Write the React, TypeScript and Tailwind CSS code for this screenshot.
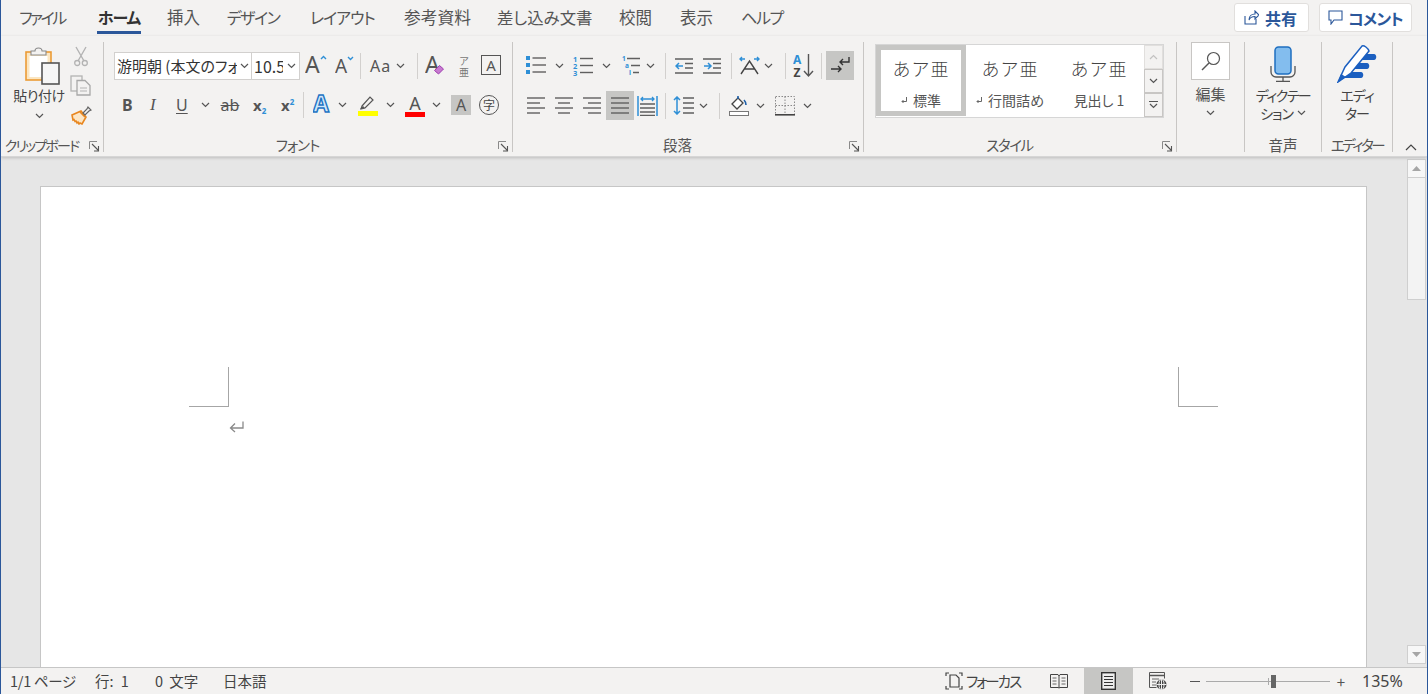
import React from "react";

const G = "#5f5f5f";
const B = "#2e8fd6";
const ff = "'Noto Sans','Noto Sans CJK JP',sans-serif";

type P = { className?: string };

function Chev({ className = "" }: P) {
  return (
    <svg width="9" height="6" viewBox="0 0 9 6" className={"shrink-0 " + className}>
      <path d="M1 1l3.5 3.5L8 1" fill="none" stroke="#555" strokeWidth="1.2" />
    </svg>
  );
}
function Sep({ className = "" }: P) {
  return <div className={"w-px h-[26px] bg-[#d2d0ce] shrink-0 " + className} />;
}
function Launcher() {
  return (
    <svg width="11" height="11" viewBox="0 0 11 11" className="absolute right-[3px] top-[5px]">
      <path d="M.5 8V.5H8" fill="none" stroke="#8a8a8a" />
      <path d="M3 3l6 6M9.5 5v5H5" fill="none" stroke="#555" strokeWidth="1.1" />
    </svg>
  );
}
function Label({ children, className = "" }: { children: React.ReactNode; className?: string }) {
  return <div className={"text-[14.5px] leading-[18px] text-center text-[#555] whitespace-nowrap " + className}>{children}</div>;
}
function Lines({ className = "", ys, x1, x2 }: P & { ys: number[]; x1: number[]; x2: number[] }) {
  return (
    <svg width="20" height="20" viewBox="0 0 20 20" className={"shrink-0 " + className}>
      {ys.map((y, i) => (
        <path key={i} d={`M${x1[i]} ${y}H${x2[i]}`} stroke={G} strokeWidth="1.4" />
      ))}
    </svg>
  );
}

function Paste({ className = "" }: P) {
  return (
    <svg width="38" height="40" viewBox="0 0 38 40" className={className}>
      <rect x="2" y="7" width="25" height="28" fill="#fbe6c2" stroke="#eb9b35" strokeWidth="1.6" />
      <rect x="5.5" y="11" width="18" height="21" fill="#fff" />
      <path d="M7 10V6h4c0-4 7-4 7 0h4v4z" fill="#f3f2f1" stroke="#8a8a8a" strokeWidth="1.1" />
      <rect x="18" y="18" width="17" height="21" fill="#f6f6f6" stroke="#555" strokeWidth="1.6" />
    </svg>
  );
}
function Scissors() {
  return (
    <svg width="14" height="21" viewBox="0 0 14 21">
      <path d="M2 1l8 14M12 1L4 15" stroke="#b3b3b3" strokeWidth="1.4" fill="none" />
      <circle cx="3.2" cy="17" r="2.5" fill="none" stroke="#b3b3b3" strokeWidth="1.3" />
      <circle cx="10.8" cy="17" r="2.5" fill="none" stroke="#b3b3b3" strokeWidth="1.3" />
    </svg>
  );
}
function Copy() {
  return (
    <svg width="22" height="21" viewBox="0 0 22 21">
      <rect x="1" y="1" width="11" height="15" fill="none" stroke="#b3b3b3" strokeWidth="1.3" />
      <path d="M7 5.5h8l5 5v9.5H7z" fill="#f3f2f1" stroke="#a8a8a8" strokeWidth="1.3" />
      <path d="M10 13h7M10 16h7" stroke="#b3b3b3" />
    </svg>
  );
}
function Brush({ className = "" }: P) {
  return (
    <svg width="21" height="20" viewBox="0 0 21 20" className={className}>
      <path d="M1 10l9-4 5 6-4 7-2-1-1 1-1-2-1 1-1-2-1 .5-1-2-1 .5z" fill="#fce6c6" stroke="#e8861f" strokeWidth="1.6" />
      <path d="M9 7l5 5" stroke="#e8861f" strokeWidth="1.6" />
      <path d="M12 8l4-4 1-2 3 3-2 1-4 4z" fill="#f3f2f1" stroke="#666" strokeWidth="1.2" />
    </svg>
  );
}
function TA({
  s = 20,
  size = 22,
  weight = 400,
  children,
  className = "",
  w = 22,
  fill = "#555",
  stroke,
}: P & { s?: number; size?: number; weight?: number; children?: React.ReactNode; w?: number; fill?: string; stroke?: string }) {
  return (
    <svg width={w} height={s + 6} viewBox={`0 0 ${w} ${s + 6}`} className={"shrink-0 " + className}>
      <text x="0" y={s} fontFamily={ff} fontSize={size} fontWeight={weight} fill={fill} stroke={stroke} strokeWidth={stroke ? 1.4 : 0}>
        A
      </text>
      {children}
    </svg>
  );
}
function Bullets({ className = "" }: P) {
  return (
    <svg width="21" height="19" viewBox="0 0 21 19" className={"shrink-0 " + className}>
      {[2, 9, 16].map((y) => (
        <g key={y}>
          <rect x="0" y={y - 2} width="4" height="4" fill={B} />
          <path d={`M6.5 ${y}H20`} stroke={G} strokeWidth="1.4" />
        </g>
      ))}
    </svg>
  );
}
function Numbers({ className = "" }: P) {
  return (
    <svg width="21" height="21" viewBox="0 0 21 21" className={"shrink-0 " + className}>
      {["1", "2", "3"].map((n, i) => (
        <g key={n}>
          <text x="0" y={6.5 + i * 7} fontSize="7.5" fontWeight="700" fill={B} fontFamily={ff}>
            {n}
          </text>
          <path d={`M7 ${3.5 + i * 7}H20`} stroke={G} strokeWidth="1.4" />
        </g>
      ))}
    </svg>
  );
}
function Multi({ className = "" }: P) {
  return (
    <svg width="20" height="21" viewBox="0 0 20 21" className={"shrink-0 " + className}>
      <text x="1" y="6" fontSize="6.5" fontWeight="700" fill={B} fontFamily={ff}>1</text>
      <text x="4" y="13" fontSize="6.5" fontWeight="700" fill={B} fontFamily={ff}>a</text>
      <text x="8" y="20" fontSize="6.5" fontWeight="700" fill={B} fontFamily={ff}>i</text>
      <path d="M6 3.5h13M10 10.5h9M12 17.5h6" stroke={G} strokeWidth="1.4" />
    </svg>
  );
}
function Indent({ className = "", rev = false }: P & { rev?: boolean }) {
  return (
    <svg width="19" height="16" viewBox="0 0 19 16" className={"shrink-0 " + className}>
      <path d="M0 1h18M10 5.5h8M10 10h8M0 15h18" stroke={G} strokeWidth="1.3" />
      {rev ? (
        <path d="M1 8h7M5 5l3 3-3 3" fill="none" stroke={B} strokeWidth="1.5" />
      ) : (
        <path d="M8 8H1M4 5L1 8l3 3" fill="none" stroke={B} strokeWidth="1.5" />
      )}
    </svg>
  );
}
function Direction({ className = "" }: P) {
  return (
    <svg width="21" height="19" viewBox="0 0 21 19" className={"shrink-0 " + className}>
      <path d="M1 3h5M3 1L1 3l2 2M15 3h5M18 1l2 2-2 2" fill="none" stroke={B} strokeWidth="1.4" />
      <path d="M2 18L10.5 5 19 18M5.5 13h10" fill="none" stroke="#444" strokeWidth="1.4" />
    </svg>
  );
}
function SortAZ({ className = "" }: P) {
  return (
    <svg width="21" height="25" viewBox="0 0 21 25" className={"shrink-0 " + className}>
      <text x="0" y="10.5" fontSize="12" fontWeight="700" fill={B} fontFamily={ff}>A</text>
      <text x="0.5" y="23.5" fontSize="12" fontWeight="700" fill="#444" fontFamily={ff}>Z</text>
      <path d="M15.5 1v21M11 18l4.500 5 4.500-5" fill="none" stroke="#555" strokeWidth="1.4" />
    </svg>
  );
}
function Para() {
  return (
    <svg width="22" height="20" viewBox="0 0 22 20">
      <path d="M20 1v5H11M14 3l-3 3 3 3" fill="none" stroke="#333" strokeWidth="1.4" />
      <path d="M2 13h10M9 10l3 3-3 3" fill="none" stroke="#333" strokeWidth="1.4" />
    </svg>
  );
}
function Distributed({ className = "" }: P) {
  return (
    <svg width="21" height="20" viewBox="0 0 21 20" className={"shrink-0 " + className}>
      <path d="M1 0v20M20 0v20" stroke={B} strokeWidth="1.5" />
      <path d="M4 3h13M6 1L4 3l2 2M15 1l2 2-2 2" fill="none" stroke={B} strokeWidth="1.3" />
      <path d="M3 8h15M3 12h15M3 16h15M3 19.3h15" stroke={G} strokeWidth="1.3" />
    </svg>
  );
}
function LineSpacing({ className = "" }: P) {
  return (
    <svg width="22" height="19" viewBox="0 0 22 19" className={"shrink-0 " + className}>
      <path d="M4 1v17M1 4l3-3 3 3M1 15l3 3 3-3" fill="none" stroke={B} strokeWidth="1.5" />
      <path d="M10 2h11M10 7h11M10 12h11M10 17h11" stroke={G} strokeWidth="1.4" />
    </svg>
  );
}
function Shade({ className = "" }: P) {
  return (
    <svg width="20" height="21" viewBox="0 0 20 21" className={"shrink-0 " + className}>
      <path d="M3 9l6-6 5 5-6 6z" fill="#fff" stroke="#444" strokeWidth="1.3" />
      <path d="M9 1v3M15 5c2 2 2 4 2 5" fill="none" stroke="#1d5fa8" strokeWidth="1.6" />
      <rect x=".5" y="16.5" width="19" height="4" fill="#fff" stroke="#777" />
    </svg>
  );
}
function Borders({ className = "" }: P) {
  return (
    <svg width="20" height="20" viewBox="0 0 20 20" className={"shrink-0 " + className}>
      <path d="M.5.5h19v18h-19zM10 .5v18M.5 9.5h19" fill="none" stroke="#8a8a8a" strokeDasharray="1.5 1.5" />
      <path d="M0 18.8h20" stroke="#444" strokeWidth="1.6" />
    </svg>
  );
}
function Mag() {
  return (
    <svg width="20" height="20" viewBox="0 0 20 20">
      <circle cx="12.5" cy="7.5" r="6" fill="none" stroke="#555" strokeWidth="1.2" />
      <path d="M8 12l-7 7" stroke="#555" strokeWidth="1.5" />
    </svg>
  );
}
function Mic() {
  return (
    <svg width="26" height="36" viewBox="0 0 26 36">
      <rect x="5" y="1" width="16" height="27" rx="3.5" fill="#83bdee" stroke="#1f6fc0" strokeWidth="1.5" />
      <path d="M1 20v6a5 5 0 0 0 5 5h14a5 5 0 0 0 5-5v-6M13 31v4M6 35.3h14" fill="none" stroke="#555" strokeWidth="1.3" />
    </svg>
  );
}
function Pen() {
  return (
    <svg width="40" height="38" viewBox="0 0 40 38">
      <path d="M22 9h15c3 0 3 6 0 6H17zM15 18h15c3 0 3 6 0 6H11zM9 27h15c3 0 3 6 0 6H6z" fill="#1b5fc0" />
      <path d="M1 37L8 22 25 1c2-1 6 2 7 5L14 28z" fill="#fff" stroke="#1b5fc0" strokeWidth="1.5" />
      <path d="M1 37l3-8 5 3z" fill="#1b5fc0" />
    </svg>
  );
}
function Share() {
  return (
    <svg width="15" height="15" viewBox="0 0 15 15" className="shrink-0">
      <path d="M1 6v8h11V9" fill="none" stroke="#2b579a" strokeWidth="1.1" />
      <path d="M5 10c0-4 3-6 6-6V1l4 4-4 4V6.5c-2 0-5 1-6 3.5z" fill="none" stroke="#2b579a" strokeWidth="1.1" />
    </svg>
  );
}
function Bubble() {
  return (
    <svg width="15" height="15" viewBox="0 0 15 15" className="shrink-0">
      <path d="M1 1h13v9H6l-3 4v-4H1z" fill="none" stroke="#2b579a" strokeWidth="1.1" />
    </svg>
  );
}
function Focus() {
  return (
    <svg width="18" height="18" viewBox="0 0 18 18" className="shrink-0">
      <path d="M1 4V1h3M14 1h3v3M1 14v3h3M14 17h3v-3" fill="none" stroke="#444" strokeWidth="1.2" />
      <path d="M5 3h6l3 3v9H5z" fill="none" stroke="#444" strokeWidth="1.2" />
    </svg>
  );
}
function ReadMode({ className = "" }: P) {
  return (
    <svg width="18" height="15" viewBox="0 0 18 15" className={"shrink-0 " + className}>
      <path d="M.5.5H8L9 2l1-1.5h7.500v13H10L9 14l-1-.5H.5zM9 2v12" fill="none" stroke="#444" />
      <path d="M2.5 4h4M2.5 7h4M2.5 10h4M11.5 4h4M11.5 7h4M11.5 10h4" stroke="#666" />
    </svg>
  );
}
function PrintMode() {
  return (
    <svg width="15" height="18" viewBox="0 0 15 18" className="shrink-0">
      <rect x=".7" y=".7" width="13.6" height="16.6" fill="#eee" stroke="#333" strokeWidth="1.4" />
      <path d="M3 4.5h9M3 7.5h9M3 10.5h9M3 13.5h9" stroke="#333" strokeWidth="1.2" />
    </svg>
  );
}
function WebMode({ className = "" }: P) {
  return (
    <svg width="18" height="18" viewBox="0 0 18 18" className={"shrink-0 " + className}>
      <path d="M.5.5h15v6M.5.5v15h7" fill="none" stroke="#555" />
      <path d="M.5 3.5h15" stroke="#555" strokeWidth="1.5" />
      <path d="M3 7h7M3 10h4M3 13h4" stroke="#666" />
      <circle cx="12.5" cy="12.5" r="5" fill="#444" />
      <path d="M7.5 12.5h10M12.5 7.5v10" stroke="#eee" />
      <ellipse cx="12.5" cy="12.5" rx="2.5" ry="5" fill="none" stroke="#eee" />
    </svg>
  );
}
function Tri({ up }: { up?: boolean }) {
  return (
    <svg width="9" height="5" viewBox="0 0 9 5">
      <path d={up ? "M0 5L4.5 0 9 5z" : "M0 0l4.5 5L9 0z"} fill="#a6a6a6" />
    </svg>
  );
}
function Ret({ className = "", small = false }: P & { small?: boolean }) {
  return small ? (
    <svg width="6" height="7" viewBox="0 0 6 7" className={"shrink-0 " + className}>
      <path d="M5.5 0v4.500H1M2.500 3L1 4.500 2.500 6" fill="none" stroke="#666" />
    </svg>
  ) : (
    <svg width="15" height="12" viewBox="0 0 15 12" className={"shrink-0 " + className}>
      <path d="M14 .5V7H1.5M6 2.5L1.5 7 6 11" fill="none" stroke="#8a8a8a" strokeWidth="1.3" />
    </svg>
  );
}

const tabs = [
  { t: "ファイル", c: "ml-[17px] w-[48px] tracking-[-2.4px] text-[16px]" },
  { t: "ホーム", c: "ml-[31px] w-[44px] tracking-[-1px] text-[16px]", on: true },
  { t: "挿入", c: "ml-[26px] w-[33px] text-[16.5px]" },
  { t: "デザイン", c: "ml-[26px] w-[54px] tracking-[-1.5px] text-[16px]" },
  { t: "レイアウト", c: "ml-[30px] w-[64px] tracking-[-1px] text-[16px]" },
  { t: "参考資料", c: "ml-[30px] w-[67px] text-[16.8px]" },
  { t: "差し込み文書", c: "ml-[26px] w-[94px] text-[16.4px]" },
  { t: "校閲", c: "ml-[28px] w-[33px] text-[16.5px]" },
  { t: "表示", c: "ml-[28px] w-[33px] text-[16.5px]" },
  { t: "ヘルプ", c: "ml-[28px] w-[41px] tracking-[-1.3px] text-[16px]" },
];

function Sample({ label, ret, className = "" }: { label: string; ret?: boolean; className?: string }) {
  return (
    <div className={"flex flex-col items-center shrink-0 " + className}>
      <div className="text-[18px] leading-[24px] font-light text-[#444] tracking-[1px] mt-[10px] [font-feature-settings:normal]">
        あア亜
      </div>
      <div className="flex items-center gap-[6px] text-[14px] leading-[20px] text-[#555] mt-[10px]">
        {ret && <Ret small />}
        <span>{label}</span>
      </div>
    </div>
  );
}

export default function App() {
  return (
    <div className="w-[1428px] h-[694px] overflow-hidden flex flex-col bg-[#f3f2f1] border-x border-[#2b579a] font-['Noto_Sans_CJK_JP','Noto_Sans',sans-serif] [font-feature-settings:'palt'] text-[#444]">
      {/* tab bar */}
      <div className="h-[36px] flex shrink-0 relative">
        {tabs.map((x) => (
          <div
            key={x.t}
            className={
              "pt-[5px] text-center leading-[24px] whitespace-nowrap shrink-0 " +
              x.c +
              (x.on ? " font-bold text-[#333] border-b-[3px] border-[#2b579a] h-[34px]" : " h-[36px] text-[#555]")
            }
          >
            {x.t}
          </div>
        ))}
        <div className="ml-auto mr-[15px] mt-[3px] flex gap-[10px] h-[29px]">
          <div className="w-[75px] bg-white border border-[#e1dfdd] rounded-[3px] flex items-center justify-center gap-[6px] text-[16px] font-bold text-[#2b579a] pr-[2px]">
            <Share />
            共有
          </div>
          <div className="w-[93px] bg-white border border-[#e1dfdd] rounded-[3px] flex items-center justify-center gap-[5px] text-[16px] font-bold text-[#2b579a] tracking-[-0.8px]">
            <Bubble />
            コメント
          </div>
        </div>
      </div>

      {/* ribbon */}
      <div className="h-[121px] shrink-0 flex pt-[6px] pb-[4px] border-b border-[#d6d6d6] shadow-[0_1px_3px_rgba(0,0,0,0.18)] relative z-10">
        {/* clipboard */}
        <div className="w-[103px] shrink-0 border-r border-[#c8c6c4] flex flex-col">
          <div className="flex flex-1 min-h-0">
            <div className="w-[64px] ml-[6px] flex flex-col items-center pt-[3px]">
              <Paste className="ml-[8px]" />
              <div className="text-[14px] leading-[18px] mt-[1px] text-[#444] whitespace-nowrap tracking-[-0.5px]">貼り付け</div>
              <Chev className="mt-[9px]" />
            </div>
            <div className="flex flex-col items-center w-[22px] ml-[-1px] gap-[8px] pt-[4px]">
              <Scissors />
              <Copy />
              <Brush className="mt-[1px]" />
            </div>
          </div>
          <div className="relative -mb-[2px] pr-[21px]">
            <Label className="text-[14px] tracking-[-1.8px]">クリップボード</Label>
            <Launcher />
          </div>
        </div>

        {/* font */}
        <div className="w-[409px] shrink-0 border-r border-[#c8c6c4] flex flex-col">
          <div className="flex-1 min-h-0 pt-[10px]">
            <div className="flex items-center h-[28px] pl-[10px]">
              <div className="w-[138px] h-[28px] bg-white border border-[#d2d0ce] flex items-center overflow-hidden shrink-0">
                <span className="w-[122px] overflow-hidden whitespace-nowrap pl-[2px] text-[15px] text-[#333] shrink-0">游明朝 (本文のフォント</span>
                <Chev className="ml-[3px]" />
              </div>
              <div className="w-[48px] h-[28px] bg-white border border-[#d2d0ce] border-l-0 flex items-center overflow-hidden shrink-0">
                <span className="w-[31px] overflow-hidden whitespace-nowrap pl-[2px] text-[16px] text-[#333] shrink-0">10.5</span>
                <Chev className="ml-[4px]" />
              </div>
              <TA className="ml-[5px]" size={23} w={22}>
                <path d="M16 6l2.500-2.500L21 6" fill="none" stroke={B} strokeWidth="1.4" />
              </TA>
              <TA className="ml-[8px]" size={19} w={20}>
                <path d="M13 4l2.500 2.500L18 4" fill="none" stroke={B} strokeWidth="1.4" />
              </TA>
              <Sep className="ml-[5px]" />
              <span className="ml-[9px] w-[26px] text-[16px] tracking-[1px] text-[#555] font-['Noto_Sans',sans-serif]">Aa</span>
              <Chev />
              <Sep className="ml-[12px]" />
              <TA className="ml-[7px]" size={23} w={22}>
                <path d="M9.500 17.500l5-5 4 3.500-5 5z" fill="#c77ad0" stroke="#a03eb0" />
              </TA>
              <div className="ml-[11px] w-[12px] text-[10px] leading-[11px] text-center text-[#777]">
                ア<br />亜
              </div>
              <div className="ml-[11px] w-[20px] h-[20px] -mt-[2px] border border-[#555] flex items-center justify-center text-[15px] leading-none text-[#555] font-['Noto_Sans',sans-serif]">
                A
              </div>
            </div>
            <div className="flex items-center h-[28px] mt-[11px] pl-[18px] font-['Noto_Sans',sans-serif] text-[#555]">
              <span className="w-[12px] text-[16px] font-bold">B</span>
              <span className="ml-[16px] w-[10px] text-[17px] italic font-['Liberation_Serif',serif]">I</span>
              <span className="ml-[16px] w-[14px] text-[16px] underline underline-offset-2">U</span>
              <Chev className="ml-[11px]" />
              <span className="ml-[10px] w-[20px] text-[16px] line-through text-center">ab</span>
              <span className="ml-[13px] w-[15px] text-[15px] font-bold leading-none whitespace-nowrap">
                x<span className="text-[8px] text-[#2e8fd6] relative top-[3px]">2</span>
              </span>
              <span className="ml-[13px] w-[15px] text-[15px] font-bold leading-none whitespace-nowrap">
                x<span className="text-[8px] text-[#2e8fd6] relative top-[-6px]">2</span>
              </span>
              <Sep className="ml-[7px]" />
              <TA className="ml-[9px]" size={23} weight={700} w={22} fill="#d3e9f9" stroke="#1e74c4" />
              <Chev className="ml-[3px]" />
              <svg width="22" height="22" viewBox="0 0 22 22" className="ml-[10px] shrink-0">
                <path d="M5 12l8-9 3 3-8 8-4 1z" fill="#f3f2f1" stroke="#555" strokeWidth="1.2" />
                <path d="M3 15l5-1-2-2z" fill="#555" />
                <rect x="1" y="17" width="20" height="5" fill="#ffff00" />
              </svg>
              <Chev className="ml-[7px]" />
              <div className="ml-[10px] w-[20px] flex flex-col items-center shrink-0">
                <span className="text-[18px] leading-[18px] text-[#555]">A</span>
                <span className="w-[20px] h-[5px] bg-[#ff0000]" />
              </div>
              <Chev className="ml-[7px]" />
              <div className="ml-[10px] w-[20px] h-[20px] bg-[#c6c6c4] flex items-center justify-center text-[16px] text-[#555] shrink-0">A</div>
              <div className="ml-[8px] w-[20px] h-[20px] rounded-full border-[1.5px] border-[#555] flex items-center justify-center text-[12px] leading-none text-[#444] shrink-0 font-['Noto_Sans_CJK_JP',sans-serif]">字</div>
            </div>
          </div>
          <div className="relative -mb-[2px] pr-[21px]">
            <Label className="tracking-[-1px]">フォント</Label>
            <Launcher />
          </div>
        </div>

        {/* paragraph */}
        <div className="w-[351px] shrink-0 border-r border-[#c8c6c4] flex flex-col">
          <div className="flex-1 min-h-0 pt-[9px]">
            <div className="flex items-center h-[29px] pl-[13px]">
              <Bullets />
              <Chev className="ml-[8px]" />
              <Numbers className="ml-[9px]" />
              <Chev className="ml-[8px]" />
              <Multi className="ml-[10px]" />
              <Chev className="ml-[5px]" />
              <Sep className="ml-[10px]" />
              <Indent className="ml-[9px]" />
              <Indent className="ml-[9px]" rev />
              <Sep className="ml-[9px]" />
              <Direction className="ml-[7px]" />
              <Chev className="ml-[4px]" />
              <Sep className="ml-[12px]" />
              <SortAZ className="ml-[7px]" />
              <Sep className="ml-[7px]" />
              <div className="ml-[4px] w-[28px] h-[29px] bg-[#c6c6c4] flex items-center justify-center shrink-0">
                <Para />
              </div>
            </div>
            <div className="flex items-center h-[29px] mt-[11px] pl-[14px]">
              <Lines ys={[2, 7, 12, 17]} x1={[0, 0, 0, 0]} x2={[18, 13, 18, 13]} />
              <Lines className="ml-[8px]" ys={[2, 7, 12, 17]} x1={[0, 3, 0, 3]} x2={[18, 15, 18, 15]} />
              <Lines className="ml-[8px]" ys={[2, 7, 12, 17]} x1={[0, 5, 0, 5]} x2={[18, 18, 18, 18]} />
              <div className="ml-[3px] w-[28px] h-[29px] bg-[#c6c6c4] flex items-center justify-center shrink-0">
                <Lines ys={[2, 7, 12, 17]} x1={[1, 1, 1, 1]} x2={[19, 19, 19, 19]} />
              </div>
              <Distributed className="ml-[3px]" />
              <Sep className="ml-[7px]" />
              <LineSpacing className="ml-[7px]" />
              <Chev className="ml-[4px]" />
              <Sep className="ml-[11px]" />
              <Shade className="ml-[9px]" />
              <Chev className="ml-[7px]" />
              <Borders className="ml-[10px]" />
              <Chev className="ml-[8px]" />
            </div>
          </div>
          <div className="relative -mb-[2px] pr-[21px]">
            <Label>段落</Label>
            <Launcher />
          </div>
        </div>

        {/* styles */}
        <div className="w-[313px] shrink-0 border-r border-[#c8c6c4] flex flex-col">
          <div className="flex-1 min-h-0 pt-[2px] pl-[11px]">
            <div className="w-[289px] h-[74px] border border-[#d6d6d6] bg-white flex">
              <div className="w-[90px] h-[71px] shrink-0 border-[5px] border-[#c6c6c4] flex flex-col items-center">
                <div className="-mt-[4px]">
                  <Sample label="標準" ret />
                </div>
              </div>
              <Sample label="行間詰め" ret className="w-[88px] mt-[1px]" />
              <Sample label="見出し 1" className="w-[90px] mt-[1px]" />
              <div className="flex-1 flex flex-col">
                <div className="h-[24px] border border-[#e1dfdd] bg-[#f3f2f1] flex items-center justify-center">
                  <Chev className="opacity-30 rotate-180" />
                </div>
                <div className="h-[24px] border border-[#c8c6c4] bg-[#f3f2f1] flex items-center justify-center">
                  <Chev />
                </div>
                <div className="h-[24px] border border-[#c8c6c4] bg-[#f3f2f1] flex flex-col items-center justify-center gap-[1px]">
                  <div className="w-[9px] h-px bg-[#555]" />
                  <Chev />
                </div>
              </div>
            </div>
          </div>
          <div className="relative -mb-[2px] pr-[21px]">
            <Label className="tracking-[-1.4px]">スタイル</Label>
            <Launcher />
          </div>
        </div>

        {/* edit */}
        <div className="w-[68px] shrink-0 border-r border-[#c8c6c4] flex flex-col items-center">
          <div className="w-[39px] h-[38px] bg-white border border-[#c8c6c4] flex items-center justify-center">
            <Mag />
          </div>
          <div className="text-[15px] leading-[18px] mt-[5px] text-[#555]">編集</div>
          <Chev className="mt-[7px]" />
        </div>

        {/* dictation */}
        <div className="w-[77px] shrink-0 border-r border-[#c8c6c4] flex flex-col items-center">
          <div className="mt-[4px] h-[36px]">
            <Mic />
          </div>
          <div className="mt-[4px] text-[14px] leading-[18px] text-[#444] whitespace-nowrap tracking-[-1.5px]">ディクテー</div>
          <div className="text-[14px] leading-[18px] text-[#444] whitespace-nowrap flex items-center gap-[4px] tracking-[-1px]">
            ション
            <Chev />
          </div>
          <div className="mt-auto -mb-[2px]">
            <Label>音声</Label>
          </div>
        </div>

        {/* editor */}
        <div className="w-[71px] shrink-0 border-r border-[#c8c6c4] flex flex-col items-center">
          <div className="mt-[3px] h-[38px]">
            <Pen />
          </div>
          <div className="mt-[3px] text-[14px] leading-[18px] text-[#444] whitespace-nowrap text-center tracking-[-1px]">
            エディ
            <br />
            ター
          </div>
          <div className="mt-auto -mb-[2px]">
            <Label className="tracking-[-2.400px]">エディター</Label>
          </div>
        </div>

        {/* collapse */}
        <div className="flex-1 flex items-end justify-end pr-[10px] pb-[1px]">
          <svg width="12" height="7" viewBox="0 0 12 7">
            <path d="M1 6l5-5 5 5" fill="none" stroke="#444" strokeWidth="1.2" />
          </svg>
        </div>
      </div>

      {/* document area */}
      <div className="flex-1 min-h-0 flex bg-[#e6e6e6]">
        <div className="flex-1 pl-[39px] pr-[40px] pt-[29px] flex min-w-0">
          <div className="flex-1 bg-white border border-b-0 border-[#c6c6c6] relative">
            <div className="absolute left-[148px] top-[180px] w-[40px] h-[40px] border-r border-b border-[#a6a6a6]" />
            <div className="absolute right-[148px] top-[180px] w-[40px] h-[40px] border-l border-b border-[#a6a6a6]" />
            <Ret className="absolute left-[188px] top-[234px]" />
          </div>
        </div>
        <div className="w-[19px] mr-[1px] pt-[2px] pb-[3px] flex flex-col shrink-0">
          <div className="h-[19px] bg-[#f7f7f7] border border-[#cfcfcf] flex items-center justify-center">
            <Tri up />
          </div>
          <div className="h-[122px] bg-[#f3f3f3] border border-[#cfcfcf] border-t-0" />
          <div className="mt-auto h-[19px] bg-[#f7f7f7] border border-[#cfcfcf] flex items-center justify-center">
            <Tri />
          </div>
        </div>
      </div>

      {/* status bar */}
      <div className="h-[27px] shrink-0 flex items-center border-t border-[#c6c6c6] text-[14.5px] text-[#444] bg-[#f3f2f1]">
        <span className="ml-[9px] w-[66px] whitespace-nowrap tracking-[-0.3px]">1/1 ページ</span>
        <span className="ml-[19px] w-[36px] whitespace-nowrap [word-spacing:4px]">行: 1</span>
        <span className="ml-[24px] w-[44px] whitespace-nowrap [word-spacing:3px]">0 文字</span>
        <span className="ml-[24px] w-[44px] whitespace-nowrap">日本語</span>
        <div className="ml-auto flex items-center h-full">
          <Focus />
          <span className="ml-[3px] w-[56px] whitespace-nowrap tracking-[-2px]">フォーカス</span>
          <ReadMode className="ml-[28px]" />
          <div className="ml-[16px] w-[49px] h-full bg-[#c6c6c4] flex items-center justify-center">
            <PrintMode />
          </div>
          <WebMode className="ml-[16px]" />
          <div className="ml-[23px] w-[10px] h-px bg-[#555]" />
          <div className="ml-[6px] w-[124px] h-px bg-[#aaa] flex items-center shrink-0">
            <div className="ml-[62px] w-px h-[7px] bg-[#aaa]" />
            <div className="ml-[2px] w-[5px] h-[13px] bg-[#666]" />
          </div>
          <span className="ml-[6px] w-[10px] text-center text-[15px] leading-none text-[#555]">+</span>
          <span className="ml-[16px] mr-[24px] w-[41px] text-[16px] whitespace-nowrap font-['Noto_Sans',sans-serif]">135%</span>
        </div>
      </div>
    </div>
  );
}
